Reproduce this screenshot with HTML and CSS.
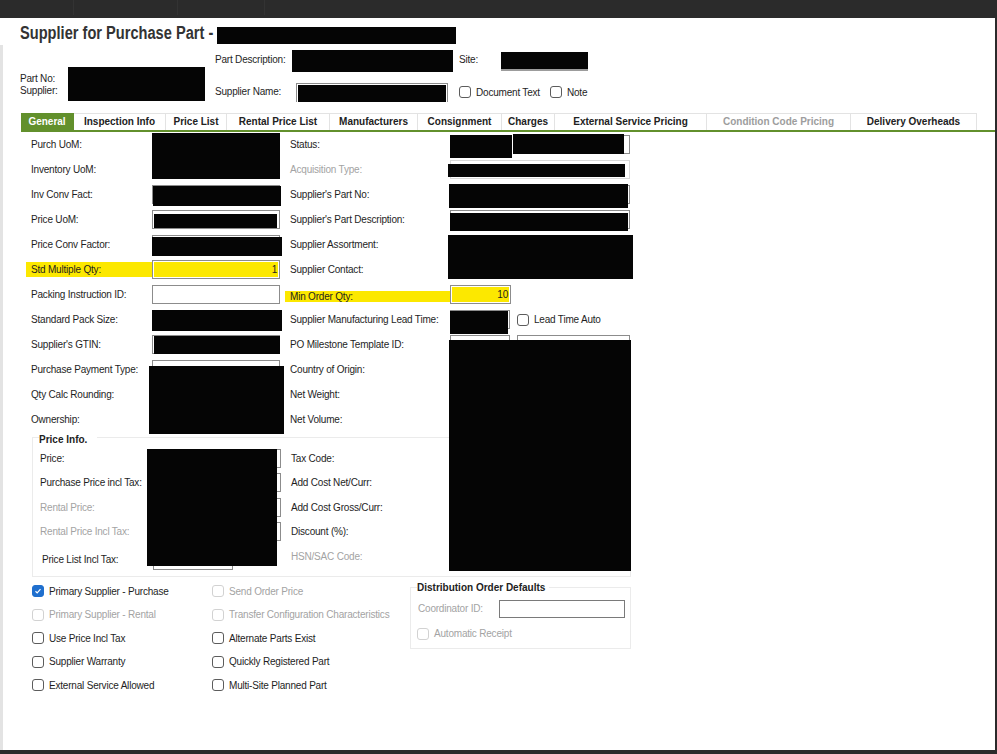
FILE: index.html
```html
<!DOCTYPE html>
<html lang="en">
<head>
	<meta charset="UTF-8">
	<title>Supplier for Purchase Part</title>
	<link rel="stylesheet" href="styles.css">
</head>
<body>
	<div class="topbar"><span></span><span></span><span></span></div>
	<div class="window">
		<h1 class="title"><span class="title-text">Supplier for Purchase Part -</span><span class="blk title-mask"></span></h1>

		<!-- header fields -->
		<div class="header">
			<div class="ident">
				<div class="ident-labels"><span>Part No:</span><span>Supplier:</span></div>
				<div class="blk ident-box"></div>
			</div>
			<div class="header-fields">
				<div class="hrow">
					<label class="desc-label">Part Description:</label>
					<div class="blk desc-box"></div>
					<label class="site-label">Site:</label>
					<div class="blk site-box"></div>
				</div>
				<div class="hrow hrow2">
					<label class="name-label">Supplier Name:</label>
					<div class="name-field"><div class="blk"></div></div>
					<label class="chk doc-chk"><span class="box"></span>Document Text</label>
					<label class="chk note-chk"><span class="box"></span>Note</label>
				</div>
			</div>
		</div>

		<ul class="tabs">
			<li class="active">General</li>
			<li>Inspection Info</li>
			<li>Price List</li>
			<li>Rental Price List</li>
			<li>Manufacturers</li>
			<li>Consignment</li>
			<li>Charges</li>
			<li>External Service Pricing</li>
			<li class="off">Condition Code Pricing</li>
			<li>Delivery Overheads</li>
		</ul>

		<div class="tab-body">
			<div class="form">
				<label>Purch UoM:</label><span class="inp"></span>
				<label>Status:</label><div class="pair"><span class="inp w61"></span><span class="inp w117"></span></div>

				<label>Inventory UoM:</label><span class="inp"></span>
				<label class="muted">Acquisition Type:</label><span class="inp wide inp-muted"></span>

				<label>Inv Conv Fact:</label><span class="inp"></span>
				<label>Supplier's Part No:</label><span class="inp wide"></span>

				<label>Price UoM:</label><span class="inp"></span>
				<label>Supplier's Part Description:</label><span class="inp wide"></span>

				<label>Price Conv Factor:</label><span class="inp"></span>
				<label>Supplier Assortment:</label><span class="inp wide"></span>

				<label class="hl">Std Multiple Qty:</label><span class="inp hl-inp">1</span>
				<label>Supplier Contact:</label><span class="inp wide"></span>

				<label>Packing Instruction ID:</label><span class="inp"></span>
				<label class="hl hl-thin">Min Order Qty:</label><span class="inp w61 hl-inp">10</span>

				<label>Standard Pack Size:</label><span class="inp"></span>
				<label>Supplier Manufacturing Lead Time:</label>
				<div class="pair"><span class="inp w60"></span><label class="chk lead-chk"><span class="box"></span>Lead Time Auto</label></div>

				<label>Supplier's GTIN:</label><span class="inp"></span>
				<label>PO Milestone Template ID:</label><div class="pair gap7"><span class="inp w60"></span><span class="inp w113"></span></div>

				<label>Purchase Payment Type:</label><span class="inp"></span>
				<label>Country of Origin:</label><span class="inp wide"></span>

				<label>Qty Calc Rounding:</label><span class="inp"></span>
				<label>Net Weight:</label><span class="inp wide"></span>

				<label>Ownership:</label><span class="inp"></span>
				<label>Net Volume:</label><span class="inp wide"></span>
			</div>

			<fieldset class="group price-info">
				<legend>Price Info.</legend>
				<div class="form price-form">
					<label>Price:</label><div class="pair"><span class="inp w85"></span><span class="inp w41"></span></div>
					<label>Tax Code:</label><span class="inp wide"></span>

					<label>Purchase Price incl Tax:</label><div class="pair"><span class="inp w85"></span><span class="inp w41"></span></div>
					<label>Add Cost Net/Curr:</label><span class="inp wide"></span>

					<label class="muted">Rental Price:</label><div class="pair"><span class="inp w85"></span><span class="inp w41"></span></div>
					<label>Add Cost Gross/Curr:</label><span class="inp wide"></span>

					<label class="muted">Rental Price Incl Tax:</label><div class="pair"><span class="inp w85"></span><span class="inp w41"></span></div>
					<label>Discount (%):</label><span class="inp wide"></span>

					<label class="low">Price List Incl Tax:</label><span class="inp w80 low-inp"></span>
					<label class="muted">HSN/SAC Code:</label><span class="inp wide"></span>
				</div>
			</fieldset>

			<div class="bottom">
				<div class="checks">
					<label class="chk-row"><span class="box on"><svg viewBox="0 0 12 12"><path d="M3 6.3l2 2 4-4.6"/></svg></span>Primary Supplier - Purchase</label>
					<label class="chk-row disabled"><span class="box"></span>Primary Supplier - Rental</label>
					<label class="chk-row"><span class="box"></span>Use Price Incl Tax</label>
					<label class="chk-row"><span class="box"></span>Supplier Warranty</label>
					<label class="chk-row"><span class="box"></span>External Service Allowed</label>
				</div>
				<div class="checks checks-2">
					<label class="chk-row disabled"><span class="box"></span>Send Order Price</label>
					<label class="chk-row disabled"><span class="box"></span>Transfer Configuration Characteristics</label>
					<label class="chk-row"><span class="box"></span>Alternate Parts Exist</label>
					<label class="chk-row"><span class="box"></span>Quickly Registered Part</label>
					<label class="chk-row"><span class="box"></span>Multi-Site Planned Part</label>
				</div>
				<fieldset class="group dist">
					<legend>Distribution Order Defaults</legend>
					<div class="coord-row">
						<label class="muted">Coordinator ID:</label><span class="inp coord-inp"></span>
					</div>
					<label class="chk-row disabled auto-row"><span class="box"></span>Automatic Receipt</label>
				</fieldset>
			</div>

			<!-- hidden values -->
			<div class="mask m-uom"></div>
			<div class="mask m-status-a"></div>
			<div class="mask m-status-b"></div>
			<div class="mask m-acq"></div>
			<div class="mask m-conv"></div>
			<div class="mask m-partno"></div>
			<div class="mask m-price-uom"></div>
			<div class="mask m-partdesc"></div>
			<div class="mask m-conv-factor"></div>
			<div class="mask m-assort"></div>
			<div class="mask m-pack"></div>
			<div class="mask m-lead"></div>
			<div class="mask m-gtin"></div>
			<div class="mask m-payment"></div>
			<div class="mask m-milestone"></div>
			<div class="mask m-price"></div>
		</div>
	</div>
</body>
</html>
```

FILE: styles.css
```css
*{box-sizing:border-box;}
body{margin:0;background:#2b2b2b;font-family:"Liberation Sans",Arial,sans-serif;font-size:10px;letter-spacing:-0.2px;color:#1e1e1e;}
label{white-space:nowrap;}

.topbar{height:18px;display:flex;}
.topbar span{height:15px;border-right:1px solid #333;}
.topbar span:nth-child(1){width:74px;}
.topbar span:nth-child(2){width:104px;}
.topbar span:nth-child(3){width:87px;}

.window{position:relative;width:995px;height:732px;background:#fff;overflow:hidden;}
.window::before{content:"";position:absolute;left:0;top:27px;bottom:0;width:3px;background:#e3e3e3;}

.blk{background:#050505;}

/* title: bold face squeezed to a narrow width */
.title{display:flex;align-items:flex-start;margin:5px 0 0 20px;font:bold 17.5px/20px "Liberation Sans",Arial,sans-serif;letter-spacing:0;color:#333;}
.title-text{display:inline-block;transform:scaleX(0.835);transform-origin:0 0;white-space:nowrap;margin-right:-38px;}
.title-mask{display:inline-block;width:239px;height:17px;margin:4px 0 0 4px;}

/* header */
.header{display:flex;margin:6px 0 0 20px;}
.ident{display:flex;width:195px;margin-top:17px;}
.ident-labels{width:48px;padding-top:6px;line-height:12.3px;display:flex;flex-direction:column;}
.ident-box{width:137px;height:34px;}
.hrow{display:flex;align-items:center;height:22px;}
.hrow > label{margin-top:-3px;}
.hrow2{margin-top:11px;height:19px;}
.desc-label{width:77px;}
.desc-box{width:161px;height:22px;}
.site-label{width:42px;margin-left:6px;}
.site-box{width:87px;height:19px;border-bottom:2px solid #9c9c9c;}
.name-label{width:81px;}
.name-field{width:152px;height:19px;border:1px solid #8c8c8c;border-bottom:0;padding:1px 1px 0;}
.name-field .blk{height:100%;}
.chk{display:flex;align-items:center;}
.hrow > .chk{margin-top:-1px;}
.doc-chk{margin-left:11px;}
.note-chk{margin-left:10px;}

/* tabs */
.tabs{display:grid;grid-template-columns:53px 92px 61px 103px 88px 84px 53px 152px 144px 126px;list-style:none;margin:11px 0 0 21px;padding:0;border-bottom:2px solid #62902c;}
.tabs li{height:17px;line-height:15px;text-align:center;font-weight:bold;letter-spacing:0;color:#222;border:1px solid #e3e3e3;border-left:0;border-bottom:0;white-space:nowrap;}
.tabs li.active{background:#62902c;border-color:#62902c;color:#fff;}
.tabs li.off{color:#9d9d9d;}

/* general tab */
.tab-body{position:relative;margin-left:21px;padding-left:10px;}
.form{display:grid;grid-template-columns:121px 138px 160px 180px;grid-auto-rows:25px;align-items:center;}
.inp{display:block;width:128px;height:19px;border:1px solid #8c8c8c;background:#fff;text-align:right;padding-right:2px;line-height:17px;}
.inp.wide{width:180px;}
.inp-muted{border-color:#d8d8d8;}
.w60{width:60px;}
.w61{width:61px;}
.w117{width:117px;}
.w113{width:113px;}
.w85{width:85px;}
.w41{width:41px;}
.w80{width:80px;}
.pair{display:flex;align-items:center;gap:2px;}
.gap7{gap:7px;}
.lead-chk{margin-left:5px;}
.muted{color:#a3a3a3;}

.hl{background:#fce800;margin-left:-5px;padding-left:5px;line-height:15px;}
.hl-thin{line-height:11px;margin-top:4px;}
.inp.hl-inp{background:#fce800;box-shadow:inset 0 0 0 1px #fff;}

/* fieldsets */
.group{margin:0;border:1px solid #ebebeb;min-inline-size:0;}
.group legend{font-weight:bold;letter-spacing:0;color:#222;}
.price-info{width:599px;margin:-3px 0 0 1px;padding:0 0 7px 7px;}
.price-info legend{margin-left:-1px;padding:5px 10px 0 0;line-height:12px;}
.price-form{grid-template-columns:113px 138px 160px 180px;grid-auto-rows:24.5px;}
.low{padding:7px 0 0 2px;}
.low-inp{margin-top:8px;}

/* check boxes */
.box{flex:none;display:flex;align-items:center;justify-content:center;width:12px;height:12px;border:1px solid #5c5c5c;border-radius:3px;margin-right:5px;background:#fff;}
.box svg{width:10px;height:10px;}
.box svg path{fill:none;stroke:#fff;stroke-width:1.4;}
.box.on{background:#1f6fce;border-color:#1f6fce;}
.disabled{color:#a3a3a3;}
.disabled .box{border-color:#d2d2d2;}

.bottom{display:flex;align-items:flex-start;margin-top:3px;padding-left:1px;}
.checks{width:180px;}
.checks-2{width:198px;}
.chk-row{display:flex;align-items:center;height:23.5px;}
.dist{width:221px;margin-top:2px;padding:0 0 4px 6px;}
.dist legend{padding:0 4px 0 0;line-height:12px;}
.coord-row{display:flex;align-items:center;margin-top:6px;padding-left:1px;}
.coord-row label{width:81px;}
.coord-inp{width:126px;height:18px;border-color:#7a7a7a;}
.auto-row{margin-top:6px;height:20px;}

/* hidden values drawn over the fields */
.mask{position:absolute;background:#050505;}
.m-uom{left:131px;top:1px;width:128px;height:46px;}
.m-status-a{left:429px;top:3px;width:62px;height:23px;}
.m-status-b{left:492px;top:2px;width:111px;height:20px;}
.m-acq{left:427px;top:32px;width:177px;height:13px;}
.m-conv{left:132px;top:54px;width:128px;height:20px;}
.m-partno{left:428px;top:52px;width:179px;height:24px;}
.m-price-uom{left:133px;top:82px;width:123px;height:14px;}
.m-partdesc{left:429px;top:81px;width:178px;height:18px;}
.m-conv-factor{left:131px;top:105px;width:130px;height:19px;}
.m-assort{left:427px;top:103px;width:185px;height:44px;}
.m-pack{left:131px;top:178px;width:130px;height:21px;}
.m-lead{left:429px;top:179px;width:58px;height:23px;}
.m-gtin{left:133px;top:204px;width:126px;height:18px;}
.m-payment{left:128px;top:234px;width:135px;height:68px;}
.m-milestone{left:428px;top:208px;width:182px;height:231px;}
.m-price{left:126px;top:317px;width:130px;height:117px;}
```
